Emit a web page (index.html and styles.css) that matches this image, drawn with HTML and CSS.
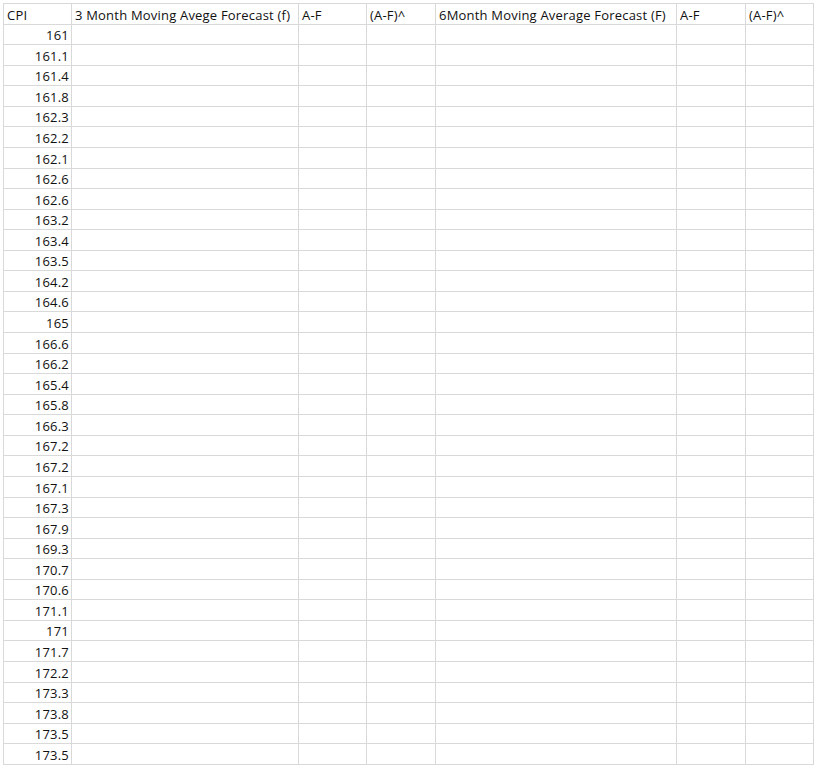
FILE: index.html
```html
<!DOCTYPE html>
<html>
<head>
<meta charset="utf-8">
<link rel="stylesheet" href="styles.css">
</head>
<body>
<div class="sheet">
  <div class="c">CPI</div><div class="c">3 Month Moving Avege Forecast (f)</div><div class="c">A-F</div><div class="c">(A-F)^</div><div class="c">6Month Moving Average Forecast (F)</div><div class="c">A-F</div><div class="c">(A-F)^</div>
  <div class="c n">161</div><div class="c"></div><div class="c"></div><div class="c"></div><div class="c"></div><div class="c"></div><div class="c"></div>
  <div class="c n">161.1</div><div class="c"></div><div class="c"></div><div class="c"></div><div class="c"></div><div class="c"></div><div class="c"></div>
  <div class="c n">161.4</div><div class="c"></div><div class="c"></div><div class="c"></div><div class="c"></div><div class="c"></div><div class="c"></div>
  <div class="c n">161.8</div><div class="c"></div><div class="c"></div><div class="c"></div><div class="c"></div><div class="c"></div><div class="c"></div>
  <div class="c n">162.3</div><div class="c"></div><div class="c"></div><div class="c"></div><div class="c"></div><div class="c"></div><div class="c"></div>
  <div class="c n">162.2</div><div class="c"></div><div class="c"></div><div class="c"></div><div class="c"></div><div class="c"></div><div class="c"></div>
  <div class="c n">162.1</div><div class="c"></div><div class="c"></div><div class="c"></div><div class="c"></div><div class="c"></div><div class="c"></div>
  <div class="c n">162.6</div><div class="c"></div><div class="c"></div><div class="c"></div><div class="c"></div><div class="c"></div><div class="c"></div>
  <div class="c n">162.6</div><div class="c"></div><div class="c"></div><div class="c"></div><div class="c"></div><div class="c"></div><div class="c"></div>
  <div class="c n">163.2</div><div class="c"></div><div class="c"></div><div class="c"></div><div class="c"></div><div class="c"></div><div class="c"></div>
  <div class="c n">163.4</div><div class="c"></div><div class="c"></div><div class="c"></div><div class="c"></div><div class="c"></div><div class="c"></div>
  <div class="c n">163.5</div><div class="c"></div><div class="c"></div><div class="c"></div><div class="c"></div><div class="c"></div><div class="c"></div>
  <div class="c n">164.2</div><div class="c"></div><div class="c"></div><div class="c"></div><div class="c"></div><div class="c"></div><div class="c"></div>
  <div class="c n">164.6</div><div class="c"></div><div class="c"></div><div class="c"></div><div class="c"></div><div class="c"></div><div class="c"></div>
  <div class="c n">165</div><div class="c"></div><div class="c"></div><div class="c"></div><div class="c"></div><div class="c"></div><div class="c"></div>
  <div class="c n">166.6</div><div class="c"></div><div class="c"></div><div class="c"></div><div class="c"></div><div class="c"></div><div class="c"></div>
  <div class="c n">166.2</div><div class="c"></div><div class="c"></div><div class="c"></div><div class="c"></div><div class="c"></div><div class="c"></div>
  <div class="c n">165.4</div><div class="c"></div><div class="c"></div><div class="c"></div><div class="c"></div><div class="c"></div><div class="c"></div>
  <div class="c n">165.8</div><div class="c"></div><div class="c"></div><div class="c"></div><div class="c"></div><div class="c"></div><div class="c"></div>
  <div class="c n">166.3</div><div class="c"></div><div class="c"></div><div class="c"></div><div class="c"></div><div class="c"></div><div class="c"></div>
  <div class="c n">167.2</div><div class="c"></div><div class="c"></div><div class="c"></div><div class="c"></div><div class="c"></div><div class="c"></div>
  <div class="c n">167.2</div><div class="c"></div><div class="c"></div><div class="c"></div><div class="c"></div><div class="c"></div><div class="c"></div>
  <div class="c n">167.1</div><div class="c"></div><div class="c"></div><div class="c"></div><div class="c"></div><div class="c"></div><div class="c"></div>
  <div class="c n">167.3</div><div class="c"></div><div class="c"></div><div class="c"></div><div class="c"></div><div class="c"></div><div class="c"></div>
  <div class="c n">167.9</div><div class="c"></div><div class="c"></div><div class="c"></div><div class="c"></div><div class="c"></div><div class="c"></div>
  <div class="c n">169.3</div><div class="c"></div><div class="c"></div><div class="c"></div><div class="c"></div><div class="c"></div><div class="c"></div>
  <div class="c n">170.7</div><div class="c"></div><div class="c"></div><div class="c"></div><div class="c"></div><div class="c"></div><div class="c"></div>
  <div class="c n">170.6</div><div class="c"></div><div class="c"></div><div class="c"></div><div class="c"></div><div class="c"></div><div class="c"></div>
  <div class="c n">171.1</div><div class="c"></div><div class="c"></div><div class="c"></div><div class="c"></div><div class="c"></div><div class="c"></div>
  <div class="c n">171</div><div class="c"></div><div class="c"></div><div class="c"></div><div class="c"></div><div class="c"></div><div class="c"></div>
  <div class="c n">171.7</div><div class="c"></div><div class="c"></div><div class="c"></div><div class="c"></div><div class="c"></div><div class="c"></div>
  <div class="c n">172.2</div><div class="c"></div><div class="c"></div><div class="c"></div><div class="c"></div><div class="c"></div><div class="c"></div>
  <div class="c n">173.3</div><div class="c"></div><div class="c"></div><div class="c"></div><div class="c"></div><div class="c"></div><div class="c"></div>
  <div class="c n">173.8</div><div class="c"></div><div class="c"></div><div class="c"></div><div class="c"></div><div class="c"></div><div class="c"></div>
  <div class="c n">173.5</div><div class="c"></div><div class="c"></div><div class="c"></div><div class="c"></div><div class="c"></div><div class="c"></div>
  <div class="c n">173.5</div><div class="c"></div><div class="c"></div><div class="c"></div><div class="c"></div><div class="c"></div><div class="c"></div>
</div>
</body>
</html>
```

FILE: styles.css
```css
html, body {
  margin: 0;
  padding: 0;
  background: #ffffff;
}
body {
  padding: 3px 0 0 3px;
}
.sheet {
  display: grid;
  grid-template-columns: 67px 226px 67px 68px 240px 68px 67px;
  grid-auto-rows: 19.57px;
  gap: 1px;
  padding: 1px;
  width: max-content;
  background: #d9d9d9;
  font-family: "Open Sans", "Liberation Sans", sans-serif;
  font-size: 13px;
  letter-spacing: 0.2px;
  color: #111111;
}
.c {
  background: #ffffff;
  display: flex;
  align-items: flex-end;
  padding: 0 2px 0 3px;
  line-height: 18px;
  white-space: nowrap;
  overflow: hidden;
}
.n {
  justify-content: flex-end;
}
```
